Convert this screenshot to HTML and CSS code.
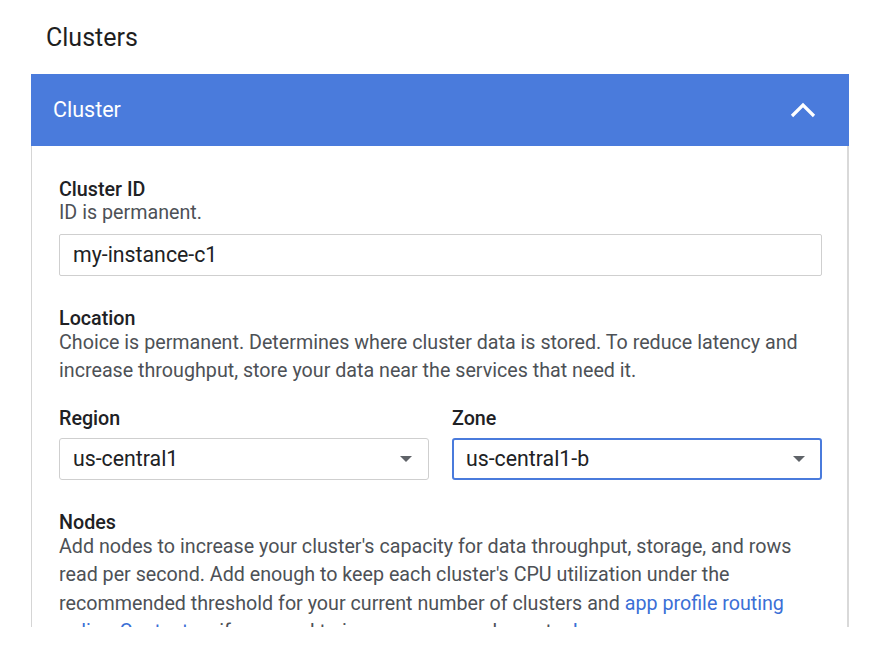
FILE: index.html
```
<!DOCTYPE html>
<html>
<head>
<meta charset="utf-8">
<link rel="stylesheet" href="styles.css">
</head>
<body>
<h1 class="title">Clusters</h1>
<div class="viewport">
  <section class="panel">
    <header class="panel-head">
      <span class="panel-title">Cluster</span>
      <svg class="chev" width="26" height="16" viewBox="0 0 26 16"><polyline points="2,14 13,3 24,14" fill="none" stroke="#fff" stroke-width="3.2"/></svg>
    </header>
    <div class="panel-body">
      <div class="field f1">
        <div class="label">Cluster ID</div>
        <div class="hint">ID is permanent.</div>
        <div class="input">my-instance-c1</div>
      </div>
      <div class="field f2">
        <div class="label">Location</div>
        <div class="hint">Choice is permanent. Determines where cluster data is stored. To reduce latency and increase throughput, store your data near the services that need it.</div>
        <div class="row">
          <div class="col">
            <div class="label sub">Region</div>
            <div class="select"><span>us-central1</span><span class="caret"></span></div>
          </div>
          <div class="col">
            <div class="label sub">Zone</div>
            <div class="select focus"><span>us-central1-b</span><span class="caret"></span></div>
          </div>
        </div>
      </div>
      <div class="field f3">
        <div class="label">Nodes</div>
        <div class="hint">Add nodes to increase your cluster's capacity for data throughput, storage, and rows read per second. Add enough to keep each cluster's CPU utilization under the recommended threshold for your current number of clusters and <a class="link">app profile routing policy</a>. <a class="link">Contact us</a> if you need to increase your node quota. <a class="link">Learn more</a></div>
      </div>
    </div>
  </section>
</div>
</body>
</html>
```
FILE: styles.css
```
* { box-sizing: border-box; }
html, body { margin: 0; padding: 0; background: #fff; }
body { font-family: Roboto, "Noto Sans", sans-serif; color: #202124; width: 877px; height: 663px; overflow: hidden; }
.title { margin: 0; padding: 24px 0 0 46px; font-size: 25px; font-weight: 400; line-height: 28px; color: #1f1f1f; }
.viewport { margin: 22px 0 0 31px; width: 818px; height: 553px; overflow: hidden; }
.panel { border-left: 1px solid #d5d5d5; border-right: 2px solid #d9d9d9; }
.panel-head { height: 72px; background: #4a7bdc; display: flex; align-items: center; justify-content: space-between; padding: 0 33px 0 22px; margin: 0 -2px 0 -1px; }
.panel-title { color: #fff; font-size: 21.5px; line-height: 24px; }
.chev { display: block; }
.panel-body { padding: 32px 25px 0 27px; }
.field { margin-bottom: 30px; }
.field.f1 { margin-bottom: 31px; }
.field.f2 { margin-bottom: 31px; }
.label { font-size: 19.7px; font-weight: 500; line-height: 24px; color: #202124; }
.hint { font-size: 19.7px; line-height: 28.5px; color: #4d5156; margin-top: -3px; }
.f2 .hint { margin-top: -2px; }
.f3 .hint { margin-top: -2px; }
.input { margin-top: 6px; height: 42px; border: 1px solid #cfcfcf; border-radius: 2px; padding: 0 13px; font-size: 21.3px; line-height: 40px; color: #202124; }
.row { display: flex; gap: 23px; margin-top: 21px; }
.col { flex: 1; }
.label.sub { margin-bottom: 7px; }
.select { height: 42px; border: 1px solid #cfcfcf; border-radius: 3px; padding: 0 16px 0 13px; display: flex; align-items: center; justify-content: space-between; font-size: 21.3px; color: #202124; }
.select.focus { border: 2px solid #4a7bdc; padding-left: 12px; padding-right: 15px; }
.caret { width: 0; height: 0; border-left: 6.5px solid transparent; border-right: 6.5px solid transparent; border-top: 6.5px solid #5f6368; }
.link { color: #3b6fd6; text-decoration: none; }
```
